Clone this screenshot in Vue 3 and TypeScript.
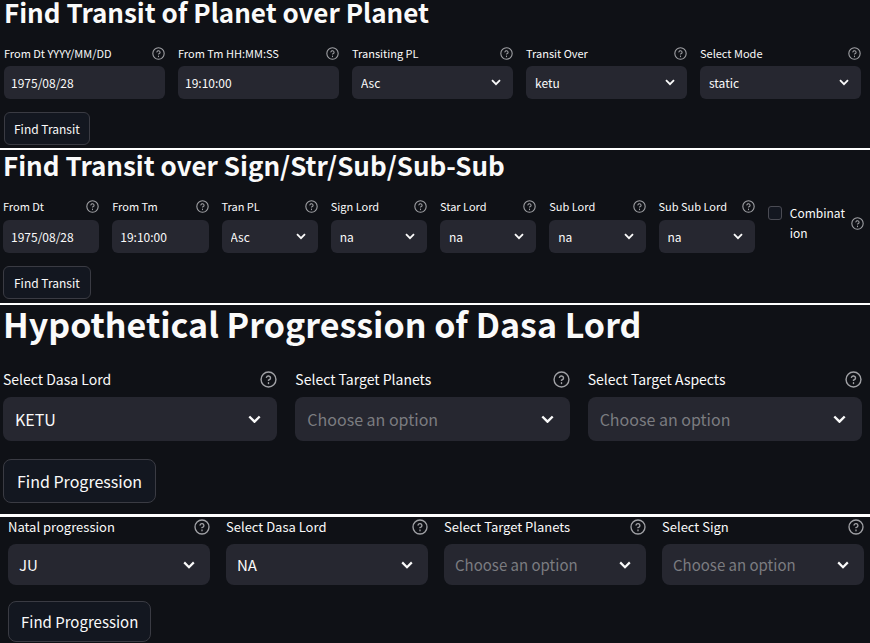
<script setup lang="ts">
import { reactive } from 'vue'

type Kind = 'text' | 'select' | 'check'

interface Field {
  id: string
  kind: Kind
  label: string
  value: string
  placeholder?: string
}

interface Panel {
  id: string
  title?: string
  action: string
  fields: Field[]
}

const panels = reactive<Panel[]>([
  {
    id: 'planet',
    title: 'Find Transit of Planet over Planet',
    action: 'Find Transit',
    fields: [
      { id: 'date', kind: 'text', label: 'From Dt YYYY/MM/DD', value: '1975/08/28' },
      { id: 'time', kind: 'text', label: 'From Tm HH:MM:SS', value: '19:10:00' },
      { id: 'transiting', kind: 'select', label: 'Transiting PL', value: 'Asc' },
      { id: 'over', kind: 'select', label: 'Transit Over', value: 'ketu' },
      { id: 'mode', kind: 'select', label: 'Select Mode', value: 'static' },
    ],
  },
  {
    id: 'sign',
    title: 'Find Transit over Sign/Str/Sub/Sub-Sub',
    action: 'Find Transit',
    fields: [
      { id: 'date', kind: 'text', label: 'From Dt', value: '1975/08/28' },
      { id: 'time', kind: 'text', label: 'From Tm', value: '19:10:00' },
      { id: 'transiting', kind: 'select', label: 'Tran PL', value: 'Asc' },
      { id: 'sign-lord', kind: 'select', label: 'Sign Lord', value: 'na' },
      { id: 'star-lord', kind: 'select', label: 'Star Lord', value: 'na' },
      { id: 'sub-lord', kind: 'select', label: 'Sub Lord', value: 'na' },
      { id: 'sub-sub-lord', kind: 'select', label: 'Sub Sub Lord', value: 'na' },
      { id: 'combination', kind: 'check', label: 'Combination', value: '' },
    ],
  },
  {
    id: 'dasa',
    title: 'Hypothetical Progression of Dasa Lord',
    action: 'Find Progression',
    fields: [
      { id: 'lord', kind: 'select', label: 'Select Dasa Lord', value: 'KETU' },
      { id: 'planets', kind: 'select', label: 'Select Target Planets', value: '', placeholder: 'Choose an option' },
      { id: 'aspects', kind: 'select', label: 'Select Target Aspects', value: '', placeholder: 'Choose an option' },
    ],
  },
  {
    id: 'natal',
    action: 'Find Progression',
    fields: [
      { id: 'natal', kind: 'select', label: 'Natal progression', value: 'JU' },
      { id: 'lord', kind: 'select', label: 'Select Dasa Lord', value: 'NA' },
      { id: 'planets', kind: 'select', label: 'Select Target Planets', value: '', placeholder: 'Choose an option' },
      { id: 'sign', kind: 'select', label: 'Select Sign', value: '', placeholder: 'Choose an option' },
    ],
  },
])
</script>

<template>
  <main class="page">
    <form v-for="panel in panels" :key="panel.id" class="panel" :class="panel.id" @submit.prevent>
      <h1 v-if="panel.title" class="title">{{ panel.title }}</h1>
      <div class="fields">
        <div v-for="field in panel.fields" :key="field.id" :class="field.kind === 'check' ? 'check' : 'field'">
          <template v-if="field.kind === 'check'">
            <input :id="`${panel.id}-${field.id}`" type="checkbox" class="box" />
            <label :for="`${panel.id}-${field.id}`" class="check-label">{{ field.label }}</label>
            <button type="button" class="help" :aria-label="`Help: ${field.label}`">
              <svg viewBox="0 0 24 24"><circle cx="12" cy="12" r="10.5" /><path d="M9.09 9a3 3 0 0 1 5.83 1c0 2-3 3-3 3M12 16.5v1.2" /></svg>
            </button>
          </template>
          <template v-else>
            <div class="caption">
              <label :for="`${panel.id}-${field.id}`">{{ field.label }}</label>
              <button type="button" class="help" :aria-label="`Help: ${field.label}`">
                <svg viewBox="0 0 24 24"><circle cx="12" cy="12" r="10.5" /><path d="M9.09 9a3 3 0 0 1 5.83 1c0 2-3 3-3 3M12 16.5v1.2" /></svg>
              </button>
            </div>
            <input
              v-if="field.kind === 'text'"
              :id="`${panel.id}-${field.id}`"
              v-model="field.value"
              type="text"
              class="control"
            />
            <div v-else class="picker">
              <select
                :id="`${panel.id}-${field.id}`"
                v-model="field.value"
                class="control"
                :class="{ empty: !field.value }"
              >
                <option :value="field.value">{{ field.value || field.placeholder }}</option>
              </select>
              <svg class="chevron" viewBox="0 0 12 8"><path d="M1.2 1.4 6 6.2l4.8-4.8" /></svg>
            </div>
          </template>
        </div>
      </div>
      <button type="submit" class="action">{{ panel.action }}</button>
    </form>
  </main>
</template>

<style>
body {
  margin: 0;
  background: #0f1116;
}
</style>

<style scoped>
.page {
  color: #fafafa;
  font-family: 'Noto Sans CJK SC', 'Noto Sans', sans-serif;
}

.panel {
  --gap: 13px;
  --text: 12px;
  --label: 11px;
  --height: 33px;
  --caption: 20px;
  --caption-gap: 3px;
  --icon: 13px;
  --arrow: 10px;
  --arrow-inset: 12px;
  --radius: 6px;
  --pad: 9px;
  --input-pad: 7px;
  --action-pad: 9px;
  --title: 26px;
  --title-line: 24px;
  --title-gap: 19px;
  display: flex;
  flex-direction: column;
  align-items: flex-start;
  padding: 0 9px 3px 4px;
}

.panel + .panel {
  border-top: 2px solid #fff;
}

.sign {
  --caption-gap: 4px;
  --input-pad: 8px;
  --action-pad: 10px;
  padding: 3px 6px 4px 3px;
}

.dasa {
  --gap: 18px;
  --text: 16px;
  --label: 14px;
  --height: 44px;
  --caption: 24px;
  --caption-gap: 6px;
  --icon: 17px;
  --arrow: 13px;
  --arrow-inset: 16px;
  --radius: 8px;
  --pad: 12px;
  --action-pad: 13px;
  --title: 34px;
  --title-line: 38px;
  --title-gap: 24px;
  padding: 0 8px 11px 3px;
}

.natal {
  --gap: 16px;
  --text: 15px;
  --label: 13px;
  --height: 41px;
  --caption: 20px;
  --caption-gap: 7px;
  --icon: 16px;
  --arrow: 12px;
  --arrow-inset: 15px;
  --radius: 8px;
  --pad: 11px;
  --action-pad: 12px;
  padding: 0 6px 0 8px;
}

.panel.natal {
  border-top-width: 3px;
}

.title {
  margin: 0 0 var(--title-gap);
  font-size: var(--title);
  line-height: var(--title-line);
  font-weight: 700;
  white-space: nowrap;
}

.fields {
  display: grid;
  grid-auto-flow: column;
  grid-auto-columns: minmax(0, 1fr);
  column-gap: var(--gap);
  width: 100%;
}

.caption {
  display: flex;
  align-items: center;
  justify-content: space-between;
  height: var(--caption);
  margin-bottom: var(--caption-gap);
  font-size: var(--label);
  line-height: var(--caption);
  white-space: nowrap;
}

.help {
  flex: none;
  display: block;
  width: var(--icon);
  height: var(--icon);
  padding: 0;
  border: 0;
  background: none;
  color: #a0a1a5;
}

.help svg {
  display: block;
  width: 100%;
  height: 100%;
  fill: none;
  stroke: currentColor;
  stroke-width: 2;
  stroke-linecap: round;
  stroke-linejoin: round;
}

.control {
  grid-area: 1 / 1;
  display: block;
  box-sizing: border-box;
  width: 100%;
  height: var(--height);
  margin: 0;
  padding: 0 var(--pad);
  border: 0;
  border-radius: var(--radius);
  appearance: none;
  background: #262730;
  color: #fafafa;
  font-family: inherit;
  font-size: var(--text);
}

input.control {
  padding: 0 var(--input-pad);
}

.control.empty {
  color: #7b7c80;
}

.picker {
  display: grid;
  align-items: center;
}

.chevron {
  grid-area: 1 / 1;
  justify-self: end;
  width: var(--arrow);
  margin-right: var(--arrow-inset);
  fill: none;
  stroke: #fafafa;
  stroke-width: 2.2;
  pointer-events: none;
}

.check {
  display: flex;
  align-items: center;
  align-self: start;
  padding-top: 7px;
}

.box {
  flex: none;
  align-self: flex-start;
  box-sizing: border-box;
  width: 14px;
  height: 14px;
  margin: 3px 8px 0 0;
  border: 1px solid #4a4b53;
  border-radius: 3px;
  appearance: none;
  background: #131720;
}

.box:checked {
  background: #ff4b4b;
}

.check-label {
  flex: 1;
  min-width: 0;
  margin-right: 4px;
  font-size: var(--text);
  line-height: 20px;
  overflow-wrap: anywhere;
}

.action {
  height: var(--height);
  margin-top: var(--gap);
  padding: 0 var(--action-pad);
  border: 1px solid #3a3b43;
  border-radius: var(--radius);
  background: #131720;
  color: #fafafa;
  font-family: inherit;
  font-size: var(--text);
  white-space: nowrap;
}
</style>
